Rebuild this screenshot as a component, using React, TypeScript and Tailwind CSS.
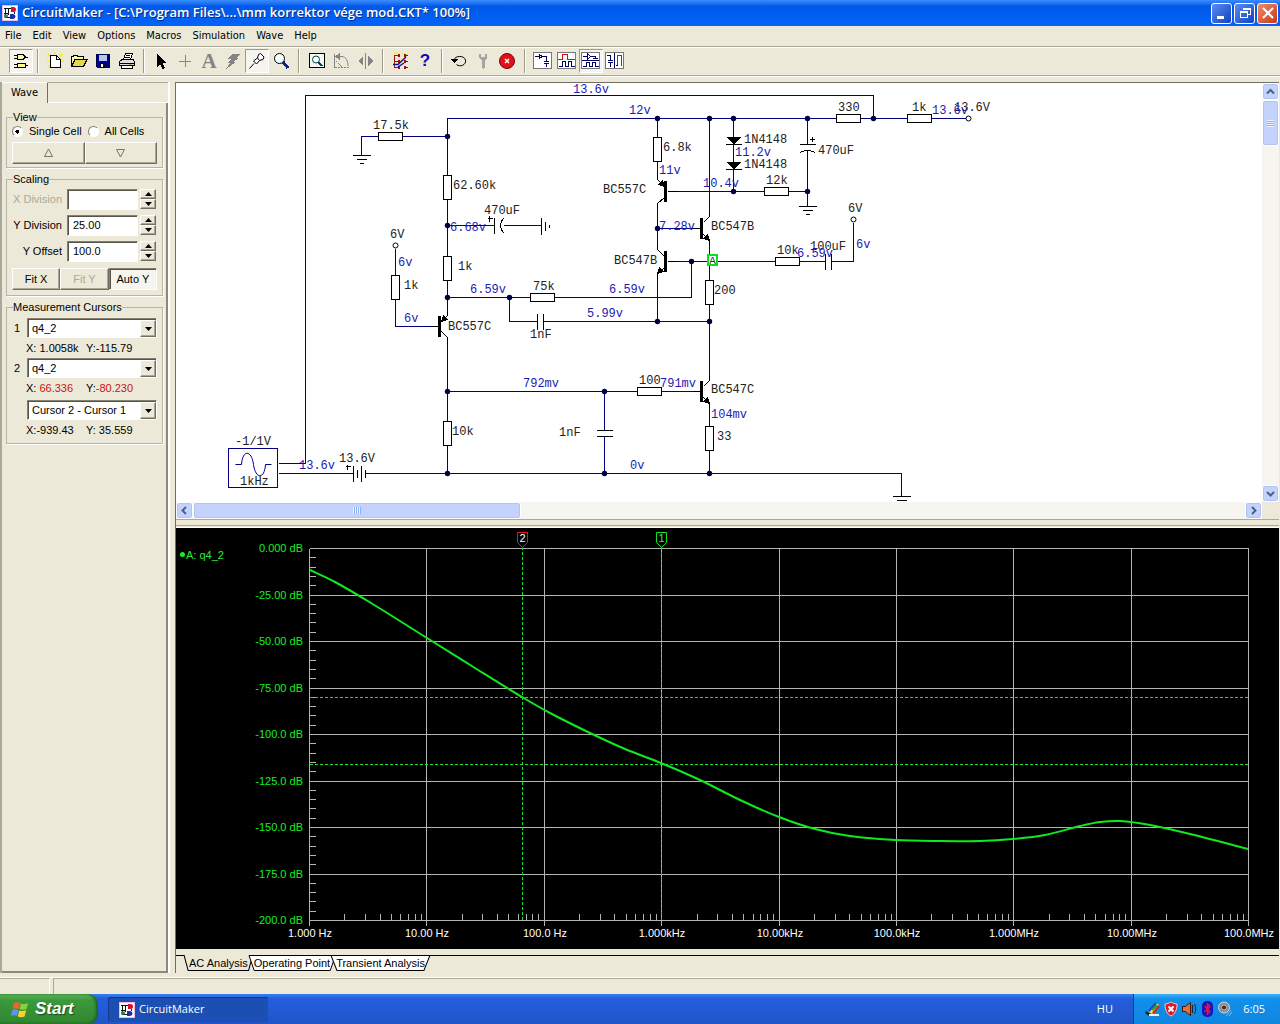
import { useState } from "react";
import type { ReactNode } from "react";

type Point = [number, number];

const MENUS = ["File", "Edit", "View", "Options", "Macros", "Simulation", "Wave", "Help"];
const TABS = ["AC Analysis", "Operating Point", "Transient Analysis"];

const BLUE = "#000080";
const GREY = "#848484";

function Icon({ children, size = 18 }: { children: ReactNode; size?: number }) {
  return (
    <svg width={size} height={size} viewBox={`0 0 ${size} ${size}`} fill="none" shapeRendering="crispEdges" aria-hidden="true">
      {children}
    </svg>
  );
}

function AppIcon() {
  return (
    <svg width="16" height="16" viewBox="0 0 16 16" fill="none" aria-hidden="true">
      <path d="M0 0H16V16H0z" fill="#f4b8e0" />
      <path d="M1 1H15V15H1z" fill="#fff" />
      <path d="M2 3.500H9M3.500 3V12M6.500 4V10M2 8.500H7M3 12.500H10" stroke="#111" />
      <path d="M2 9.500h4v3H2z" fill="#2e8b57" />
      <path d="M9 2h2.500a2.500 2.500 0 0 1 0 5H9z" fill="#d2142a" />
      <path d="M8 9h3a2.500 2.500 0 0 1 0 5H8z" fill="#1a2fa8" />
      <path d="M12.500 7V9" stroke="#222" />
    </svg>
  );
}

const TOOL_GROUPS: Array<{
  wide?: boolean;
  tools: Array<{ name: string; pressed?: boolean; art: ReactNode }>;
}> = [
  {
    tools: [
      {
        name: "Parts browser",
        pressed: true,
        art: (
          <Icon>
            <path d="M5 2.500H11L13.500 5L11 7.500H5zM5 11.500H13V15.500H5z" fill="#fff7a0" stroke="#000" />
            <path d="M2 3.500H5M2 6.500H5M13 5H16M2 12.500H5M2 15H5M13 13.500H16" stroke="#000" />
          </Icon>
        ),
      },
    ],
  },
  {
    tools: [
      {
        name: "New",
        art: (
          <Icon>
            <path d="M2 2L5 5M16 2L13 5M1 9H3M16 9H18M2 16L4 14M9 0V2" stroke="#f4ec40" strokeWidth="2" />
            <path d="M4.500 3.500H10.500L14.500 7.500V15.500H4.500z" fill="#fff" stroke="#000" />
            <path d="M10.500 3.500V7.500H14.500" stroke="#000" />
          </Icon>
        ),
      },
      {
        name: "Open",
        art: (
          <Icon>
            <path d="M1.500 14.500V4.500H3L4 3.500H7L8 4.500H13.500V7.500" fill="#fffba8" stroke="#000" />
            <path d="M1.500 14.500L5 7.500H17L13.500 14.500z" fill="#e6d84a" stroke="#000" />
          </Icon>
        ),
      },
      {
        name: "Save",
        art: (
          <Icon>
            <path d="M2.500 2.500H15.500V15.500H3.500L2.500 14.500z" fill="#000090" stroke="#000050" />
            <path d="M5 3H13V9H5z" fill="#b8c4e8" />
            <path d="M6 11H13V15H6z" fill="#08083c" />
            <path d="M7 12H9V15H7z" fill="#fff" />
          </Icon>
        ),
      },
      {
        name: "Print",
        art: (
          <Icon>
            <path d="M5.500 8L7.500 1.500H14.500L12.500 8" fill="#fff" stroke="#000" />
            <path d="M8 3.500H12M7 5.500H12" stroke="#000" />
            <path d="M1.500 9.500L4 7.500H15L16.500 9.500V13.500H1.500z" fill="#ddd" stroke="#000" />
            <path d="M3.500 13.500H14.500V16.500H3.500zM2 11H16" fill="#fff" stroke="#000" />
            <path d="M11 12H14" stroke="#c8b800" />
          </Icon>
        ),
      },
    ],
  },
  {
    wide: true,
    tools: [
      {
        name: "Arrow",
        art: (
          <Icon>
            <path d="M5 2V15L8 12L10.500 17L13 16L10.500 11H14z" fill="#000" />
          </Icon>
        ),
      },
      {
        name: "Wire",
        art: (
          <Icon>
            <path d="M3 9.500H15M9.500 3V15" stroke={GREY} />
          </Icon>
        ),
      },
      {
        name: "Text",
        art: (
          <span className="font-['Liberation_Serif',serif] text-[21px] font-bold leading-[18px] text-[#848484]">A</span>
        ),
      },
      {
        name: "Delete",
        art: (
          <Icon>
            <path d="M8 2H17L12 6H15L9 10H12L2 17L6 11H3L7 7H4z" fill={GREY} />
          </Icon>
        ),
      },
      {
        name: "Probe",
        pressed: true,
        art: (
          <Icon>
            <g shapeRendering="auto" stroke="#000">
              <path d="M1.500 16.500L6 11.500" />
              <path d="M5.500 9L9.500 6L10.500 2.500L12.500 1.500L16 5L15 7.500L11.500 8.500L8.500 12z" fill="#fff" />
              <path d="M9.500 6L11.500 8.500" />
            </g>
          </Icon>
        ),
      },
      {
        name: "Zoom",
        art: (
          <Icon>
            <circle cx="7.500" cy="6.500" r="5" fill="#f4ffff" stroke="#000" shapeRendering="auto" />
            <path d="M11 10L16 16" stroke="#102080" strokeWidth="3" />
          </Icon>
        ),
      },
    ],
  },
  {
    wide: true,
    tools: [
      {
        name: "Zoom to fit",
        art: (
          <Icon>
            <path d="M1.500 1.500H16.500V15.500H1.500z" fill="#f4f8f4" stroke="#000" />
            <circle cx="8" cy="7.500" r="3.500" stroke="#004848" fill="#fff" shapeRendering="auto" />
            <path d="M10.500 10L14 14" stroke="#004848" strokeWidth="2" />
          </Icon>
        ),
      },
      {
        name: "Rotate",
        art: (
          <Icon>
            <path d="M2.500 2V16" stroke={GREY} />
            <path d="M3 15.500H17" stroke={GREY} strokeDasharray="2 1" />
            <path d="M6 4.500H10C14 5 16 9 16 14" stroke={GREY} shapeRendering="auto" />
            <path d="M3 4.500L8 1V8z" fill={GREY} />
            <path d="M4 9L10 15" stroke={GREY} strokeDasharray="2 1" />
          </Icon>
        ),
      },
      {
        name: "Mirror",
        art: (
          <Icon>
            <path d="M9.500 1V17" stroke={GREY} />
            <path d="M7 4V14L2 9zM12 4V14L17 9z" fill={GREY} />
          </Icon>
        ),
      },
    ],
  },
  {
    tools: [
      {
        name: "Digital options",
        art: (
          <Icon>
            <path d="M2 1H6M10 2H16M1 7H4M8 8H12" stroke="#f8ec50" strokeWidth="2" />
            <path d="M2.500 3V16M3 3.500H7M12 3.500H16M3 9.500H6M12 9.500H16M3 15.500H7M12 15.500H16" stroke="#a01010" />
            <path d="M6 2H8V5H6zM12 2H14V5H12zM6 8H8V11H6zM12 8H14V11H12zM6 14H8V17H6zM12 14H14V17H12z" fill="#a01010" />
            <path d="M1 12.500H6L14 5M6 15L12 11" stroke="#1010a8" strokeWidth="1.500" shapeRendering="auto" />
          </Icon>
        ),
      },
      {
        name: "Help",
        art: <span className="font-['Liberation_Sans',sans-serif] text-[17px] font-bold leading-[18px] text-[#0a0ab4]">?</span>,
      },
    ],
  },
  {
    wide: true,
    tools: [
      {
        name: "Reset",
        art: (
          <Icon>
            <path d="M4 8C5 3.500 14 3 15.500 8C16.500 13 10 15.500 6.500 12.500" stroke="#000" shapeRendering="auto" />
            <path d="M1 7H8L4.500 11z" fill="#000" />
          </Icon>
        ),
      },
      {
        name: "Step",
        art: (
          <Icon>
            <path d="M5 2V6L8 9V15L9 17L11 15V9L13 6V2H11V5H7V2z" fill="#a4a4a0" />
          </Icon>
        ),
      },
      {
        name: "Stop",
        art: (
          <svg width="18" height="18" viewBox="0 0 18 18" fill="none" aria-hidden="true">
            <circle cx="9" cy="9" r="7.500" fill="#e01018" stroke="#800008" />
            <path d="M7 7L11 11M11 7L7 11" stroke="#fff" strokeWidth="1.500" />
          </svg>
        ),
      },
    ],
  },
  {
    tools: [
      {
        name: "Schematic view",
        art: (
          <Icon size={20}>
            <path d="M.5 1.500H18.500V17.500H.5z" fill="#fff" stroke="#777" />
            <path d="M2 5.500H6M9 5.500H13V10.500M10.500 10.500H16M10.500 12.500H16M13.500 13V16" stroke="#000060" />
            <path d="M6 3V8L9 5.500z" stroke="#000060" />
          </Icon>
        ),
      },
      {
        name: "Waveform view",
        art: (
          <Icon size={20}>
            <path d="M.5 1.500H18.500V17.500H.5z" fill="#fff" stroke="#777" />
            <path d="M1 8.500H5V3.500H10V8.500H18" stroke="#d01010" />
            <path d="M2 15.500H5V10.500H8V15.500H11V10.500H14V15.500H18" stroke="#000060" />
          </Icon>
        ),
      },
      {
        name: "Split horizontally",
        pressed: true,
        art: (
          <Icon size={20}>
            <path d="M.5 1.500H18.500V17.500H.5z" fill="#fff" stroke="#777" />
            <path d="M1 9.500H18M2 5.500H6M10 5.500H14V7.500M6.500 3V8L10 5.500zM12 7.500H17" stroke="#000060" />
            <path d="M2 15.500H5V11.500H8V15.500H11V11.500H14V15.500H18" stroke="#000060" />
          </Icon>
        ),
      },
      {
        name: "Split vertically",
        art: (
          <Icon size={20}>
            <path d="M.5 1.500H18.500V17.500H.5z" fill="#fff" stroke="#777" />
            <path d="M9.500 2V17M2 4.500H5.500V9M3 9.500H8M3 11.500H8M5.500 12V16" stroke="#000060" />
            <path d="M11 14.500H12.500V4.500H16.500V14.500" stroke="#d01010" />
            <path d="M11 14.500H13" stroke="#000060" />
          </Icon>
        ),
      },
    ],
  },
];

function TitleBar() {
  const box = "flex size-[21px] items-center justify-center rounded-[3px] border border-white";
  return (
    <header className="flex h-[26px] shrink-0 items-center gap-1 bg-linear-to-b from-[#3a8cff] via-[#0058e8] via-25% to-[#0364fb] pl-[2px] pr-[2px]">
      <AppIcon />
      <h1 className="min-w-0 flex-1 truncate font-['Open_Sans',sans-serif] text-[13px] font-semibold text-white [text-shadow:1px_1px_#0a2a7c]">
        CircuitMaker - [C:\Program Files\...\mm korrektor vége mod.CKT* 100%]
      </h1>
      <div className="flex gap-[2px]">
        <button aria-label="Minimize" className={`${box} bg-linear-to-br from-[#5c8cf4] to-[#1240c0]`}>
          <Icon>
            <path d="M4 12H11V15H4z" fill="#fff" />
          </Icon>
        </button>
        <button aria-label="Restore" className={`${box} bg-linear-to-br from-[#5c8cf4] to-[#1240c0]`}>
          <Icon>
            <path d="M4 7.500H11V13.500H4zM4 8.500H11M7 6V4.500H14V10.500H12M7 5.500H14" stroke="#fff" />
          </Icon>
        </button>
        <button aria-label="Close" className={`${box} bg-linear-to-br from-[#ee8a68] to-[#c8340c]`}>
          <svg width="18" height="18" viewBox="0 0 18 18" aria-hidden="true">
            <path d="M4 4L14 14M14 4L4 14" stroke="#fff" strokeWidth="2" />
          </svg>
        </button>
      </div>
    </header>
  );
}

function Toolbar() {
  return (
    <div className="flex h-[30px] shrink-0 items-center border-y border-[#aca899] pl-[9px] shadow-[inset_0_1px_#fff,0_1px_#fff]">
      {TOOL_GROUPS.map((group, i) => (
        <div key={i} className="flex items-center">
          {group.tools.map((tool) => (
            <button
              key={tool.name}
              aria-label={tool.name}
              className={`flex size-6 items-center justify-center ${
                tool.pressed ? "border border-[#9d9a8b] border-b-white border-r-white bg-[#f5f4ee]" : ""
              }`}
            >
              {tool.art}
            </button>
          ))}
          {i < TOOL_GROUPS.length - 1 ? (
            <span className={`h-6 w-[2px] border-l border-[#9d9a8b] bg-white ${group.wide ? "mx-[5px]" : "mx-1"}`} />
          ) : null}
        </div>
      ))}
    </div>
  );
}

const RAISED = "border border-white border-b-[#716f64] border-r-[#716f64] shadow-[inset_-1px_-1px_#aca899]";
const SUNKEN = "border border-[#848070] border-b-white border-r-white shadow-[inset_1px_1px_#55534a]";

function Group({ title, children }: { title: string; children: ReactNode }) {
  return (
    <fieldset className="border border-[#b8b5a4] px-[5px] pb-[3px] shadow-[1px_1px_#fff]">
      <legend className="ml-[1px] leading-[14px]">{title}</legend>
      {children}
    </fieldset>
  );
}

function Scale({ id, label, value, disabled }: { id: string; label: string; value: string; disabled?: boolean }) {
  return (
    <div className="flex h-[26px] items-center">
      <label htmlFor={id} className={`w-[50px] text-right ${disabled ? "text-[#aca899]" : ""}`}>
        {label}
      </label>
      <input
        id={id}
        defaultValue={value}
        disabled={disabled}
        className={`ml-[5px] h-[21px] w-[71px] bg-white px-[5px] ${SUNKEN}`}
      />
      <div className="ml-[2px] flex flex-col">
        <button aria-label={`${label} up`} className={`flex h-[10px] w-4 items-center justify-center ${RAISED}`}>
          <svg width="7" height="4" viewBox="0 0 7 4" aria-hidden="true">
            <path d="M0 4L3.500 0L7 4z" />
          </svg>
        </button>
        <button aria-label={`${label} down`} className={`flex h-[10px] w-4 items-center justify-center ${RAISED}`}>
          <svg width="7" height="4" viewBox="0 0 7 4" aria-hidden="true">
            <path d="M0 0L3.500 4L7 0z" />
          </svg>
        </button>
      </div>
    </div>
  );
}

function Drop({ label, options }: { label: string; options: string[] }) {
  return (
    <div className="relative w-[130px]">
      <select aria-label={label} className={`block h-[20px] w-full appearance-none bg-white px-1 ${SUNKEN}`}>
        {options.map((o) => (
          <option key={o}>{o}</option>
        ))}
      </select>
      <span
        className={`pointer-events-none absolute right-[1px] top-[2px] flex h-[17px] w-4 items-center justify-center bg-[#ece9d8] ${RAISED}`}
      >
        <svg width="7" height="4" viewBox="0 0 7 4" aria-hidden="true">
          <path d="M0 0L3.500 4L7 0z" />
        </svg>
      </span>
    </div>
  );
}

function Readout({ x, y, red }: { x: string; y: string; red?: boolean }) {
  const tone = red ? "text-[#c81414]" : "";
  return (
    <div className="flex h-5 items-center whitespace-pre pl-[14px]">
      <span className="w-[60px]">
        X:<span className={tone}>{x}</span>
      </span>
      <span>
        Y:<span className={tone}>{y}</span>
      </span>
    </div>
  );
}

function WavePanel() {
  const [view, setView] = useState("Single Cell");
  return (
    <aside className="flex w-[170px] shrink-0 flex-col border-l-2 border-r-2 border-[#aca899] border-r-white text-[11px]">
      <div className="flex h-[21px] shrink-0">
        <button className="w-[46px] border-r border-[#716f64] border-t border-t-white pt-[1px] font-['DejaVu_Sans_Condensed',sans-serif]">
          Wave
        </button>
        <span className="flex-1 border-b border-b-white border-t border-t-[#aca899]" />
      </div>
      <div className="flex flex-1 flex-col gap-1 border-b-2 border-r-2 border-[#8c897a] pl-1 pr-[3px] pt-[7px]">
        <Group title="View">
          <div className="flex h-[14px] items-center gap-[6px]">
            {["Single Cell", "All Cells"].map((v) => (
              <label key={v} className="flex items-center gap-[6px]">
                <input
                  type="radio"
                  name="view"
                  checked={view === v}
                  onChange={() => setView(v)}
                  className="size-[11px] appearance-none rounded-full border border-[#848070] border-b-white border-r-white bg-white checked:bg-[radial-gradient(circle,#000_2px,#fff_2px)]"
                />
                {v}
              </label>
            ))}
          </div>
          <div className="mt-1 flex">
            <button aria-label="Previous cell" className={`flex h-[22px] flex-1 items-center justify-center ${RAISED}`}>
              <svg width="11" height="10" viewBox="0 0 11 10" fill="none" stroke="#777468" aria-hidden="true">
                <path d="M1.500 8.500L5.500 1L9.500 8.500z" />
              </svg>
            </button>
            <button aria-label="Next cell" className={`flex h-[22px] flex-1 items-center justify-center ${RAISED}`}>
              <svg width="11" height="10" viewBox="0 0 11 10" fill="none" stroke="#777468" aria-hidden="true">
                <path d="M1.500 1.500L5.500 9L9.500 1.500z" />
              </svg>
            </button>
          </div>
        </Group>
        <Group title="Scaling">
          <Scale id="xdiv" label="X Division" value="" disabled />
          <Scale id="ydiv" label="Y Division" value="25.00" />
          <Scale id="yoff" label="Y Offset" value="100.0" />
          <div className="mb-[2px] mt-1 flex">
            <button className={`h-[22px] flex-1 ${RAISED}`}>Fit X</button>
            <button disabled className={`h-[22px] flex-1 text-[#aca899] ${RAISED}`}>
              Fit Y
            </button>
            <button className={`h-[22px] flex-1 bg-[#f5f4ee] ${SUNKEN}`}>Auto Y</button>
          </div>
        </Group>
        <Group title="Measurement Cursors">
          <div className="mt-1 flex items-center justify-between pl-[2px]">
            1 <Drop label="Cursor 1" options={["q4_2"]} />
          </div>
          <Readout x=" 1.0058k" y="-115.79" />
          <div className="flex items-center justify-between pl-[2px]">
            2 <Drop label="Cursor 2" options={["q4_2"]} />
          </div>
          <Readout x=" 66.336" y="-80.230" red />
          <div className="mt-[2px] flex justify-end">
            <Drop label="Difference" options={["Cursor 2 - Cursor 1"]} />
          </div>
          <Readout x="-939.43" y=" 35.559" />
        </Group>
      </div>
    </aside>
  );
}

const WIRES = [
  "M278 463H305V95H873V118",
  "M447 175V118H836M860 118H907M931 118H966",
  "M402 136H447M378 136H361V155",
  "M447 199V256M447 225H494M503 225H541",
  "M395 248V275M395 299V326H430",
  "M447 280V310M447 297H530M554 297H691V261",
  "M509 297V321H537M543 321H709",
  "M447 343V421M447 391H637M661 391H692",
  "M447 445V473M278 473H353M365 473H901V492",
  "M604 391V430M604 436V473",
  "M657 118V137M657 161V174M657 208V244M657 228H692",
  "M657 278V321M709 118V211M709 245V280",
  "M733 118V136M733 144V161M733 169V191M677 191H764M788 191H807",
  "M807 118V144M807 150V206",
  "M676 261H775M799 261H825M831 261H853V222",
  "M709 304V375M709 407V426M709 450V473",
];

const NODES: Point[] = [
  [447, 136], [447, 225], [447, 297], [447, 391], [447, 473], [509, 297], [604, 391], [604, 473],
  [657, 118], [709, 118], [733, 118], [807, 118], [873, 118], [733, 191], [807, 191], [657, 228],
  [691, 261], [657, 321], [709, 321], [709, 473],
];

// centre of each resistor body, "v" stands upright
const RESISTORS: Array<[number, number, "h" | "v"]> = [
  [390, 136, "h"], [447, 187, "v"], [447, 268, "v"], [395, 287, "v"], [542, 297, "h"], [447, 433, "v"],
  [657, 149, "v"], [776, 191, "h"], [848, 118, "h"], [919, 118, "h"], [787, 261, "h"], [709, 292, "v"],
  [649, 391, "h"], [709, 438, "v"],
];

const SYMBOLS = [
  // grounds
  "M352 155H370M356 159H366M359 163H363",
  "M541 217V234M545 221V230M549 224V227",
  "M798 206H816M802 210H812M805 214H809",
  "M901 491V496M892 496H910M896 500H906",
  // capacitors
  "M494 217V233M487 218H492M489 215V221",
  "M537 313V329M543 313V329",
  "M596 430H612M596 436H612",
  "M799 144H815M809 139H814M812 136V141",
  "M825 253V269M831 253V269",
  // battery
  "M353 465V481M357 469V477M361 465V481M365 469V477M345 466H350M347 464V469",
  // diode bars
  "M725 144H741M725 169H741",
  // transistor leads
  "M430 326H438M447 310V315L441 321M441 331L447 337V343",
  "M677 191H667M657 174V179L664 186M664 197L657 203V208",
  "M692 228H700M709 211V216L703 222M703 234L709 240V245",
  "M676 261H667M657 244V249L664 256M664 267L657 273V278",
  "M692 391H700M709 375V380L703 386M703 397L709 403V407",
];

const PARTS: Array<[number, number, string]> = [
  [373, 129, "17.5k"], [453, 189, "62.60k"], [484, 214, "470uF"], [390, 238, "6V"], [404, 289, "1k"],
  [458, 270, "1k"], [533, 290, "75k"], [530, 338, "1nF"], [448, 330, "BC557C"], [452, 435, "10k"],
  [235, 445, "-1/1V"], [240, 485, "1kHz"], [339, 462, "13.6V"], [663, 151, "6.8k"], [603, 193, "BC557C"],
  [744, 143, "1N4148"], [744, 168, "1N4148"], [818, 154, "470uF"], [766, 184, "12k"], [838, 111, "330"],
  [912, 111, "1k"], [954, 111, "13.6V"], [711, 230, "BC547B"], [614, 264, "BC547B"], [848, 212, "6V"],
  [777, 254, "10k"], [810, 250, "100uF"], [714, 294, "200"], [639, 384, "100"], [711, 393, "BC547C"],
  [717, 440, "33"], [559, 436, "1nF"],
];

const VOLTAGES: Array<[number, number, string]> = [
  [573, 93, "13.6v"], [629, 114, "12v"], [932, 114, "13.6v"], [450, 231, "6.68v"], [398, 266, "6v"],
  [404, 322, "6v"], [470, 293, "6.59v"], [609, 293, "6.59v"], [587, 317, "5.99v"], [523, 387, "792mv"],
  [299, 469, "13.6v"], [659, 174, "11v"], [735, 156, "11.2v"], [703, 187, "10.4v"], [659, 230, "7.28v"],
  [797, 257, "6.59v"], [856, 248, "6v"], [660, 387, "791mv"], [711, 418, "104mv"], [630, 469, "0v"],
];

function Schematic() {
  return (
    <svg
      width="1086"
      height="419"
      viewBox="176 83 1086 419"
      fill="none"
      shapeRendering="crispEdges"
      className="block shrink-0 font-['Liberation_Mono',monospace] text-[12px]"
    >
      <path d="M438 316h3v21h-3zM664 181h3v21h-3zM700 218h3v21h-3zM664 251h3v21h-3zM700 381h3v21h-3z" fill="#000" />
      <g transform="translate(.5 .5)">
        <path d={WIRES.join("")} stroke={BLUE} />
        <path d={SYMBOLS.join("")} stroke="#000" />
        <path d="M504 217C499 221 499 229 504 233M799 153C802 149 812 149 815 153" stroke="#000" />
        <path d="M725 136H741L733 144zM725 161H741L733 169z" fill="#000" />
        <path
          d="M441 321L443 315L447 319zM664 186L658 184L662 180zM709 240L703 238L707 234zM657 273L659 267L663 271zM709 403L703 401L707 397z"
          fill="#000"
          stroke="#000"
        />
        {RESISTORS.map(([x, y, dir]) => (
          <rect
            key={`${x}-${y}`}
            x={dir === "h" ? x - 12 : x - 4}
            y={dir === "h" ? y - 4 : y - 12}
            width={dir === "h" ? 24 : 8}
            height={dir === "h" ? 8 : 24}
            fill="#fff"
            stroke="#000"
          />
        ))}
        {NODES.map(([x, y]) => (
          <circle key={`${x}-${y}`} cx={x} cy={y} r="2.700" fill="#000040" shapeRendering="auto" />
        ))}
        <g fill="#fff" stroke="#000" shapeRendering="auto">
          <circle cx="395" cy="245" r="2.500" />
          <circle cx="853" cy="219" r="2.500" />
          <circle cx="968" cy="118" r="2.500" />
        </g>
        <path d="M228 448H277V487H228z" stroke={BLUE} />
        <path
          d="M235 464H241C242 449 251 449 253 464C255 479 264 479 265 464H271"
          stroke={BLUE}
          shapeRendering="auto"
        />
      </g>
      <g fill="#222">
        {PARTS.map(([x, y, t]) => (
          <text key={`${x}-${y}`} x={x} y={y}>
            {t}
          </text>
        ))}
      </g>
      <g fill="#1c1cb0">
        {VOLTAGES.map(([x, y, t]) => (
          <text key={`${x}-${y}`} x={x} y={y}>
            {t}
          </text>
        ))}
      </g>
      <rect x="708" y="255" width="9" height="10" fill="#fff" stroke="#0ee01e" strokeWidth="2" />
      <text x="712.500" y="264" textAnchor="middle" fill="#333" className="text-[11px]">
        A
      </text>
    </svg>
  );
}

const FREQS = ["1.000 Hz", "10.00 Hz", "100.0 Hz", "1.000kHz", "10.00kHz", "100.0kHz", "1.000MHz", "10.00MHz", "100.0MHz"];
const LEVELS = ["0.000 dB", "-25.00 dB", "-50.00 dB", "-75.00 dB", "-100.0 dB", "-125.0 dB", "-150.0 dB", "-175.0 dB", "-200.0 dB"];

const TRACE: Point[] = [
  [310, 570], [335, 582], [371, 603], [427, 638], [475, 668], [522, 697], [550, 713], [590, 733], [625, 749],
  [661, 763], [700, 780], [740, 800], [779, 817], [815, 829], [850, 836], [896, 840], [940, 841], [980, 841],
  [1013, 839], [1045, 835], [1080, 826], [1100, 822], [1120, 821], [1150, 825], [1190, 834], [1248, 849],
];

const gridX = (decade: number) => Math.round(309 + decade * 117.4);
const gridY = (div: number) => Math.round(548 + div * 46.5);

// Catmull-Rom through the samples
function smooth(pts: Point[]) {
  let d = `M${pts[0][0]} ${pts[0][1]}`;
  for (let i = 0; i < pts.length - 1; i++) {
    const a = pts[Math.max(i - 1, 0)];
    const b = pts[i];
    const c = pts[i + 1];
    const e = pts[Math.min(i + 2, pts.length - 1)];
    d += `C${b[0] + (c[0] - a[0]) / 6} ${b[1] + (c[1] - a[1]) / 6} ${c[0] - (e[0] - b[0]) / 6} ${c[1] - (e[1] - b[1]) / 6} ${c[0]} ${c[1]}`;
  }
  return d;
}

function Plot() {
  let grid = "";
  for (let i = 0; i <= 8; i++) {
    grid += `M${gridX(i)} 548V925M309 ${gridY(i)}H1248`;
    if (i === 8) break;
    for (let k = 1; k < 5; k++) grid += `M309 ${Math.round(548 + (i + k / 5) * 46.5)}H315`;
    for (let k = 2; k < 10; k++) grid += `M${gridX(i + Math.log10(k))} 913V920`;
  }

  return (
    <svg
      viewBox="176 528 1103 421"
      preserveAspectRatio="xMinYMin meet"
      fill="none"
      className="block h-full w-full font-['Liberation_Sans',sans-serif] text-[11px]"
    >
      <g transform="translate(.5 .5)" shapeRendering="crispEdges">
        <path d={grid} stroke="#b4b4b4" />
        <path d="M309 697H1248M309 764H1248M522 546V920M661 546V920" stroke="#14e428" strokeDasharray="3 2" />
      </g>
      <path d={smooth(TRACE)} stroke="#10e820" strokeWidth="2" />
      <path d="M517.500 532.500H527.500V542.500L522.500 547.500L517.500 542.500z" fill="#000" stroke="#e01828" />
      <path d="M656.500 532.500H666.500V542.500L661.500 547.500L656.500 542.500z" fill="#000" stroke="#14e020" />
      <text x="522.500" y="542" textAnchor="middle" fill="#fff">
        2
      </text>
      <text x="661.500" y="542" textAnchor="middle" fill="#30f040">
        1
      </text>
      <circle cx="182.500" cy="554.500" r="2.500" fill="#14f020" />
      <text x="186" y="559" fill="#30e83c">
        A: q4_2
      </text>
      <g fill="#14f020" textAnchor="end">
        {LEVELS.map((t, i) => (
          <text key={t} x="303" y={gridY(i) + 4}>
            {t}
          </text>
        ))}
      </g>
      <g fill="#fff" textAnchor="middle">
        {FREQS.map((t, i) => (
          <text key={t} x={gridX(i) + 1} y="937">
            {t}
          </text>
        ))}
      </g>
    </svg>
  );
}

const XP_BUTTON =
  "flex items-center justify-center rounded-[3px] border border-white bg-[#c3d3fd] shadow-[inset_0_0_0_1px_#b0c4f4]";

function Chevron({ d }: { d: string }) {
  return (
    <svg width="9" height="9" viewBox="0 0 9 9" fill="none" stroke="#4d6185" strokeWidth="2" aria-hidden="true">
      <path d={d} />
    </svg>
  );
}

function Workspace() {
  const [tab, setTab] = useState(TABS[0]);
  return (
    <main className="ml-[5px] mr-[1px] flex min-w-0 flex-1 flex-col border-l border-[#716f64]">
      <section className="flex h-[438px] shrink-0 flex-col border-b border-t border-[#716f64] border-b-[#aca899] bg-white">
        <div className="flex min-h-0 flex-1">
          <div className="min-w-0 flex-1 overflow-hidden">
            <Schematic />
          </div>
          <div className="flex w-[17px] flex-col bg-[#f6f5f0]">
            <button aria-label="Scroll up" className={`h-[17px] ${XP_BUTTON}`}>
              <Chevron d="M1 6.500L4.500 3L8 6.500" />
            </button>
            <div className={`h-[46px] ${XP_BUTTON}`}>
              <span className="h-[7px] w-[7px] bg-[repeating-linear-gradient(#eef4fe_0_1px,#8cb0f8_1px_2px)]" />
            </div>
            <span className="flex-1" />
            <button aria-label="Scroll down" className={`h-[17px] ${XP_BUTTON}`}>
              <Chevron d="M1 3L4.500 6.500L8 3" />
            </button>
          </div>
        </div>
        <div className="flex h-[17px] shrink-0 bg-[#f6f5f0]">
          <button aria-label="Scroll left" className={`w-[17px] ${XP_BUTTON}`}>
            <Chevron d="M6 1L2.500 4.500L6 8" />
          </button>
          <div className={`w-[328px] ${XP_BUTTON}`}>
            <span className="h-[7px] w-[8px] bg-[repeating-linear-gradient(90deg,#eef4fe_0_1px,#8cb0f8_1px_2px)]" />
          </div>
          <span className="flex-1" />
          <button aria-label="Scroll right" className={`w-[17px] ${XP_BUTTON}`}>
            <Chevron d="M3 1L6.500 4.500L3 8" />
          </button>
          <span className="w-[17px] bg-[#ece9d8]" />
        </div>
      </section>
      <div className="h-2 shrink-0 border-b border-white">
        <div className="h-[6px] border-b border-[#aca899]" />
      </div>
      <section className="min-h-0 flex-1 bg-black">
        <Plot />
      </section>
      <div className="flex h-6 shrink-0 pt-[6px]">
        <span className="w-2 border-t border-black" />
        {TABS.map((t) => (
          <button key={t} onClick={() => setTab(t)} className="relative -mr-1 h-4 px-[5px] text-[11px] leading-4">
            <svg
              className="absolute inset-0 h-full w-full overflow-visible"
              viewBox="0 0 100 16"
              preserveAspectRatio="none"
              aria-hidden="true"
            >
              <path
                d={t === tab ? "M0 0L6 15.500H94L100 0" : "M0 .5L6 15.500H94L100 .5z"}
                fill={t === tab ? "#ece9d8" : "#fff"}
                stroke="#000"
                vectorEffect="non-scaling-stroke"
              />
            </svg>
            <span className="relative">{t}</span>
          </button>
        ))}
        <span className="ml-1 flex-1 border-t border-black" />
      </div>
    </main>
  );
}

function Taskbar() {
  return (
    <footer className="flex h-[30px] shrink-0 items-stretch bg-linear-to-b from-[#3a80f0] via-[#245edb] via-15% to-[#1f55c8] font-['Open_Sans',sans-serif] text-[11px] text-white">
      <button className="flex w-[98px] items-center gap-[6px] rounded-r-[10px] bg-linear-to-b from-[#5cb85c] via-[#3c9a3c] via-20% to-[#2f862f] pl-[11px] shadow-[inset_-2px_0_3px_#1d5c1d]">
        <svg width="18" height="17" viewBox="0 0 18 17" aria-hidden="true">
          <path d="M3 2C5 1 7 1 9 2L7.500 8C5.500 7 3.500 7 1.500 8z" fill="#f0642c" />
          <path d="M10 2.500C12 3.500 14 3.500 17 2L15.500 8C13 9 11 9 8.500 8z" fill="#8cd03c" />
          <path d="M1.300 9C3.500 8 5.500 8 7.200 9L5.800 15C4 14 2 14 0 15z" fill="#5a96f4" />
          <path d="M8.200 9.500C10.500 10.300 13 10 15.200 9L13.600 15.500C11 16.500 9 16.300 6.700 15.500z" fill="#fcd030" />
        </svg>
        <span className="font-['Liberation_Sans',sans-serif] text-[17px] font-bold italic [text-shadow:1px_1px_1px_#1a4a1a]">
          Start
        </span>
      </button>
      <button className="mb-[2px] ml-[10px] mt-[3px] flex w-[160px] items-center gap-1 rounded-[2px] bg-[#1c4fb4] pl-[11px] shadow-[inset_1px_1px_1px_#12388c]">
        <AppIcon />
        CircuitMaker
      </button>
      <span className="flex-1" />
      <span className="flex items-center pr-[20px]">HU</span>
      <div className="flex w-[147px] items-center gap-[2px] border-l border-[#0c3c9c] bg-linear-to-b from-[#3cb0f8] via-[#1290ea] via-15% to-[#0f86e0] pl-[11px] pr-[15px]">
        <svg width="16" height="16" viewBox="0 0 16 16" fill="none" aria-hidden="true">
          <path d="M1 10L6 13L4 15L0 12z" fill="#222" />
          <path d="M4 11L11 2L14 4L7 13z" fill="#f4e820" />
          <path d="M4 10L11 2" stroke="#1c40d8" strokeWidth="2" />
          <path d="M8 12L14 5" stroke="#d82020" strokeWidth="2" />
          <path d="M7 9L12 4" stroke="#18a030" strokeWidth="2" />
          <path d="M4 14H14" stroke="#eee" strokeWidth="2" />
        </svg>
        <svg width="16" height="16" viewBox="0 0 16 16" fill="none" aria-hidden="true">
          <path d="M8 1C10 2 12 3 14 3C14 9 12 13 8 15C4 13 2 9 2 3C4 3 6 2 8 1z" fill="#d81c2c" stroke="#f0c8c8" />
          <path d="M5.500 5.500L10.500 10.500M10.500 5.500L5.500 10.500" stroke="#fff" strokeWidth="2" />
        </svg>
        <svg width="16" height="16" viewBox="0 0 16 16" fill="none" aria-hidden="true">
          <path d="M1.500 5.500H4.500L9.500 1.500V14.500L4.500 10.500H1.500z" fill="#e8703c" stroke="#401808" />
          <path d="M11.500 4V12M13.500 3C15 6 15 10 13.500 13" stroke="#222" />
        </svg>
        <svg width="16" height="16" viewBox="0 0 16 16" fill="none" aria-hidden="true">
          <rect x="3" y="0" width="11" height="16" rx="5" fill="#1414c8" />
          <path d="M5.500 5L11 10.500L8.500 13V3L11 5.500L5.500 11" stroke="#e81830" strokeWidth="1.500" />
        </svg>
        <svg width="16" height="16" viewBox="0 0 16 16" fill="none" aria-hidden="true">
          <circle cx="7" cy="6.500" r="5.500" fill="#8c8c8c" stroke="#d8d8d8" />
          <circle cx="7" cy="6.500" r="2.500" fill="#333" stroke="#bbb" />
          <path d="M9 15L14 9M12 15L15 11" stroke="#7ab8f8" />
        </svg>
        <time className="ml-auto">6:05</time>
      </div>
    </footer>
  );
}

export default function App() {
  return (
    <div className="flex h-screen min-h-[720px] flex-col overflow-hidden bg-[#ece9d8] font-['Liberation_Sans',Arial,sans-serif] text-black">
      <TitleBar />
      <nav className="flex h-[20px] shrink-0 items-center gap-[11px] pl-[5px] font-['DejaVu_Sans_Condensed',sans-serif] text-[11px]">
        {MENUS.map((m) => (
          <button key={m}>{m}</button>
        ))}
      </nav>
      <Toolbar />
      <div className="flex min-h-0 flex-1 pt-[6px]">
        <WavePanel />
        <Workspace />
      </div>
      <div className="mt-1 flex h-[17px] shrink-0 gap-[3px] border-t border-white">
        <span className="w-[50px] border-r border-t border-[#aca899] border-r-white" />
        <span className="flex-1 border-l border-t border-[#aca899]" />
      </div>
      <Taskbar />
    </div>
  );
}
